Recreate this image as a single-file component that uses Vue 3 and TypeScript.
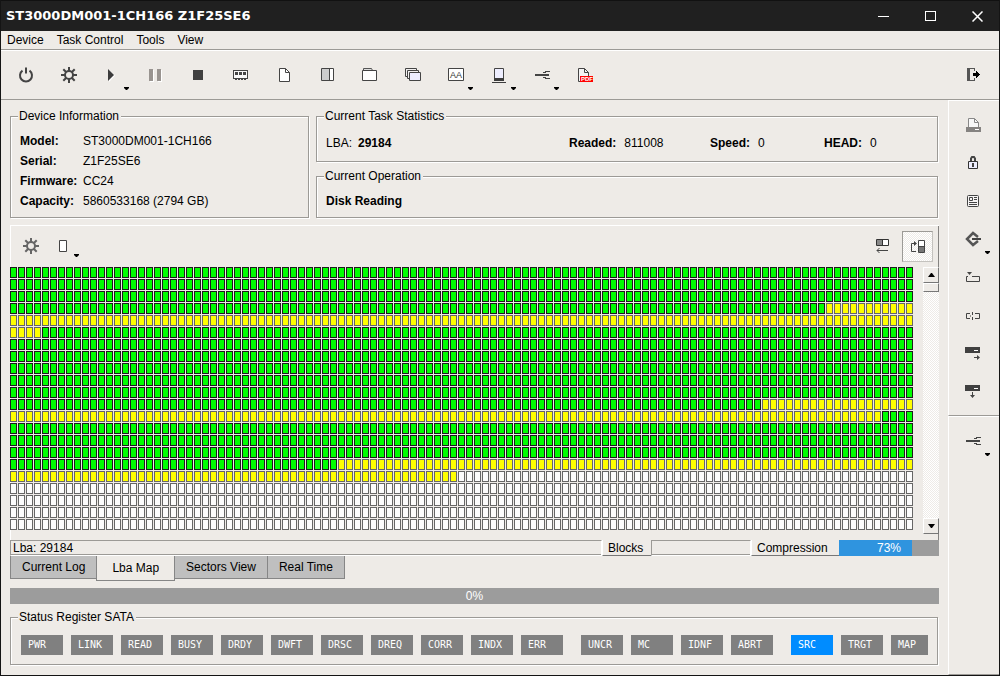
<script setup lang="ts">
import { ref } from 'vue'

type CellState = 'ok' | 'slow' | 'empty'

interface Run {
  state: CellState
  count: number
}

const deviceName = 'ST3000DM001-1CH166 Z1F25SE6'
const menus = ['Device', 'Task Control', 'Tools', 'View']

const deviceInfo = [
  { label: 'Model:', value: 'ST3000DM001-1CH166' },
  { label: 'Serial:', value: 'Z1F25SE6' },
  { label: 'Firmware:', value: 'CC24' },
  { label: 'Capacity:', value: '5860533168 (2794 GB)' },
]

const ROW = 113
const runs: Run[] = [
  { state: 'ok', count: 3 * ROW + 102 },
  { state: 'slow', count: 11 + ROW + 4 },
  { state: 'ok', count: 109 + 5 * ROW + 94 },
  { state: 'slow', count: 19 + 109 },
  { state: 'ok', count: 4 + 3 * ROW + 41 },
  { state: 'slow', count: 72 + 56 },
  { state: 'empty', count: 57 + 4 * ROW },
]
const cells: CellState[] = runs.flatMap((r) => Array<CellState>(r.count).fill(r.state))

const tabs = ['Current Log', 'Lba Map', 'Sectors View', 'Real Time']
const activeTab = ref('Lba Map')

const compression = ref(73)
const progress = ref(0)

const registers = [
  ['PWR', 'LINK', 'READ', 'BUSY', 'DRDY', 'DWFT', 'DRSC', 'DREQ', 'CORR', 'INDX', 'ERR'],
  ['UNCR', 'MC', 'IDNF', 'ABRT'],
  ['SRC', 'TRGT', 'MAP'],
]
const activeRegisters = new Set(['SRC'])

const tools = [
  { id: 'power', label: 'Power', drop: false },
  { id: 'gear', label: 'Settings', drop: false },
  { id: 'play', label: 'Start', drop: true },
  { id: 'pause', label: 'Pause', drop: false },
  { id: 'stop', label: 'Stop', drop: false },
  { id: 'memory', label: 'Memory', drop: false },
  { id: 'page', label: 'New', drop: false },
  { id: 'panels', label: 'Panels', drop: false },
  { id: 'folder', label: 'Open', drop: false },
  { id: 'windows', label: 'Windows', drop: false },
  { id: 'letters', label: 'Find', drop: true },
  { id: 'laptop', label: 'Host', drop: true },
  { id: 'connector', label: 'Connection', drop: true },
  { id: 'pdf', label: 'Export PDF', drop: false },
]

const sideTools = [
  { id: 'printer', label: 'Print', drop: false },
  { id: 'lock', label: 'Lock', drop: false },
  { id: 'news', label: 'Report', drop: false },
  { id: 'diamond', label: 'Jump', drop: true },
  { id: 'insert', label: 'Insert', drop: false },
  { id: 'split', label: 'Split', drop: false },
  { id: 'diskright', label: 'Disk copy', drop: false },
  { id: 'diskdown', label: 'Disk save', drop: false },
]
</script>

<template>
  <div class="window">
    <header class="titlebar">
      <h1>{{ deviceName }}</h1>
      <button type="button" aria-label="Minimize">
        <svg width="11" height="11" shape-rendering="crispEdges"><rect y="5" width="11" height="1" fill="#fff" /></svg>
      </button>
      <button type="button" aria-label="Maximize">
        <svg width="11" height="11" shape-rendering="crispEdges"><rect x=".5" y=".5" width="10" height="9" fill="none" stroke="#fff" /></svg>
      </button>
      <button type="button" aria-label="Close">
        <svg width="11" height="11"><path d="M.5 .5l10 10M10.500 .5l-10 10" stroke="#fff" stroke-width="1.500" /></svg>
      </button>
    </header>

    <nav class="menubar">
      <button v-for="m in menus" :key="m" type="button">{{ m }}</button>
    </nav>

    <svg class="defs" aria-hidden="true">
      <symbol id="i-power" viewBox="0 0 17 17">
        <path d="M4.500 3.600A6 6 0 1 0 11.500 3.600" fill="none" stroke="#444" stroke-width="2" />
        <path d="M8 .5v6" stroke="#444" stroke-width="2" />
      </symbol>
      <symbol id="i-gear" viewBox="0 0 17 17">
        <circle cx="8" cy="8" r="4" fill="none" stroke="currentColor" stroke-width="2" />
        <path d="M8 0v4M8 12v4M0 8h4M12 8h4M2.300 2.300l3 3M10.700 10.700l3 3M13.700 2.300l-3 3M5.300 10.700l-3 3" stroke="currentColor" stroke-width="2" />
      </symbol>
      <symbol id="i-play" viewBox="0 0 17 17">
        <path d="M5 3l6 5.500-6 6.500z" fill="#fff" />
        <path d="M4 2l6 6-6 6z" fill="#3c3c3c" />
      </symbol>
      <symbol id="i-pause" viewBox="0 0 17 17">
        <path d="M3 3h4v12h-4zM11 3h4v12h-4z" fill="#fff" />
        <path d="M2 2h4v12h-4zM10 2h4v12h-4z" fill="#999490" />
      </symbol>
      <symbol id="i-stop" viewBox="0 0 17 17"><path d="M3 3h10v10H3z" fill="#404040" /></symbol>
      <symbol id="i-memory" viewBox="0 0 17 17">
        <g shape-rendering="crispEdges">
          <path d="M.5 3.500h14v8H.5z" fill="#f8f8f8" stroke="#444" />
          <path d="M2 5h3v3H2zM6 5h3v3H6zM10 5h3v3h-3zM2 12h2v1H2zM5 12h2v1H5zM8 12h2v1H8zM11 12h2v1h-2z" fill="#444" />
        </g>
      </symbol>
      <symbol id="i-page" viewBox="0 0 17 17">
        <path d="M3.500 1.500h6l4 4v9h-10z" fill="#fff" stroke="#444" />
        <path d="M9.500 1.500v4h4" fill="none" stroke="#444" />
      </symbol>
      <symbol id="i-panels" viewBox="0 0 17 17">
        <path d="M2.500 1.500h12v12h-12z" fill="#fff" stroke="#444" />
        <path d="M3 2h7v11H3z" fill="#ccc" />
        <path d="M10.500 2v11" stroke="#444" />
      </symbol>
      <symbol id="i-folder" viewBox="0 0 17 17">
        <path d="M1.500 3V1.500h8l1 2" fill="#ddd" stroke="#555" />
        <path d="M.5 3.500h14v10H.5z" fill="#fff" stroke="#444" />
      </symbol>
      <symbol id="i-windows" viewBox="0 0 17 17">
        <path d="M.5 1.500h11v8H.5z" fill="#f2f0f0" stroke="#444" />
        <path d="M2.500 3.500h11v8h-11z" fill="#f2f0f0" stroke="#444" />
        <path d="M4.500 5.500h11v8h-11z" fill="#eef" stroke="#444" />
      </symbol>
      <symbol id="i-letters" viewBox="0 0 17 17">
        <path d="M.5 1.500h15v12H.5z" fill="#fff" stroke="#444" />
      </symbol>
      <symbol id="i-laptop" viewBox="0 0 17 17">
        <path d="M3.500 1.500h9v11h-9z" fill="#eef" stroke="#444" />
        <path d="M3 11h10v3H3zM1 15h14v1H1z" fill="#3c3c3c" />
      </symbol>
      <symbol id="i-connector" viewBox="0 0 17 17">
        <path d="M1 7h14v2H1zM11 4h5v1h-5zM9 5h3v1H9zM11 11h5v1h-5zM9 10h3v1H9z" fill="#444" />
      </symbol>
      <symbol id="i-pdf" viewBox="0 0 17 17">
        <path d="M1.500 1.500h6l4 4v9h-10z" fill="#f4f4f4" stroke="#444" />
        <path d="M7.500 1.500v4h4" fill="none" stroke="#444" />
        <path d="M3 9h13v6H3z" fill="#f00" />
      </symbol>
      <symbol id="i-exit" viewBox="0 0 17 17">
        <path d="M2 1h8v3H9V2H5v11h4v-2h1v3H2z" fill="#555" />
        <path d="M8 6h3V4h1v1h1v1h1v1h1v1h-1v1h-1v1h-1v1h-1V9H8z" fill="#000" />
      </symbol>
      <symbol id="i-printer" viewBox="0 0 17 17">
        <path d="M3.500 10V1.500h6l4 4V10" fill="#f8f8f8" stroke="#888" />
        <path d="M9.500 1.500v4h4" fill="none" stroke="#888" />
        <path d="M1 10h15v5H1z" fill="#858381" />
        <path d="M10 12h4v1h-4z" fill="#fff" />
      </symbol>
      <symbol id="i-lock" viewBox="0 0 17 17">
        <path d="M6 7V3.500L7 2h2l1 1.500V7" fill="none" stroke="#444" stroke-width="2" />
        <path d="M3.500 6.500h9v7h-9z" fill="#eef" stroke="#333" />
        <path d="M7 8h2v4H7z" fill="#444" />
      </symbol>
      <symbol id="i-news" viewBox="0 0 17 17">
        <rect x="2.500" y="2.500" width="11" height="11" rx="1" fill="#f6f4f4" stroke="#444" />
        <path d="M4.500 4.500h3v3h-3zM9 4.500h3M9 6.500h3M4 9.500h8M4 11.500h8" fill="none" stroke="#444" />
      </symbol>
      <symbol id="i-diamond" viewBox="0 0 17 17">
        <path d="M13 6L8 2 2 8l6 6 5-4" fill="none" stroke="#555" stroke-width="2.500" />
        <path d="M7 8h9" stroke="#444" stroke-width="2" />
      </symbol>
      <symbol id="i-insert" viewBox="0 0 17 17">
        <path d="M3 7.500H1.500v5h13v-5H7" fill="none" stroke="#444" />
        <path d="M2 3h5L4.500 6z" fill="#444" />
      </symbol>
      <symbol id="i-split" viewBox="0 0 17 17">
        <path d="M5 6.500H1.500v5H5M10 6.500h4.500v5H10M7.500 5v3M7.500 10v3M5 9h1" fill="none" stroke="#444" />
      </symbol>
      <symbol id="i-diskright" viewBox="0 0 17 17">
        <path d="M0 2h15v6H0z" fill="#404040" /><path d="M9 5h4v1H9z" fill="#fff" />
        <path d="M9 12h3v-2l3 2.500-3 2.500v-2H9z" fill="#444" />
      </symbol>
      <symbol id="i-diskdown" viewBox="0 0 17 17">
        <path d="M0 2h15v6H0z" fill="#404040" /><path d="M9 5h4v1H9z" fill="#fff" />
        <path d="M7 9h1v3h2l-2.500 3L5 12h2z" fill="#444" />
      </symbol>
      <symbol id="i-block" viewBox="0 0 17 17"><path d="M4.500 2.500h7v11h-7z" fill="#fff" stroke="#444" /></symbol>
      <symbol id="i-left" viewBox="0 0 17 17">
        <path d="M2.500 1.500h12v6h-12z" fill="#fff" stroke="#333" />
        <path d="M3 2h6v5H3z" fill="#888" /><path d="M8.500 2v5" stroke="#333" />
        <path d="M3 12.500h11M5.500 10L3 12.500 5.500 15" fill="none" stroke="#444" />
      </symbol>
      <symbol id="i-rotate" viewBox="0 0 17 17">
        <path d="M9.500 2.500h6v12h-6z" fill="#fff" stroke="#444" />
        <path d="M10 9h5v5h-5z" fill="#777" /><path d="M9 8.500h7" stroke="#444" />
        <path d="M7 13.500H2.500v-8H6" fill="none" stroke="#444" /><path d="M5 3l3 2.500L5 8z" fill="#444" />
      </symbol>
    </svg>

    <div class="toolbar">
      <button v-for="t in tools" :key="t.id" type="button" class="tool" :aria-label="t.label">
        <svg class="icon">
          <use :href="'#i-' + t.id" />
          <text v-if="t.id === 'letters'" x="2" y="11" class="icon-text" fill="#333" font-size="9">AA</text>
          <text v-if="t.id === 'pdf'" x="4" y="14" class="icon-text bold" fill="#fff" font-size="6">PDF</text>
        </svg>
        <svg v-if="t.drop" class="drop"><path d="M0 0h5v1L3 3H2L0 1z" /></svg>
      </button>
      <button type="button" class="tool exit" aria-label="Exit"><svg class="icon"><use href="#i-exit" /></svg></button>
    </div>

    <div class="body">
      <main class="main">
        <div class="info">
          <fieldset class="group device">
            <legend>Device Information</legend>
            <dl>
              <template v-for="d in deviceInfo" :key="d.label">
                <dt>{{ d.label }}</dt>
                <dd>{{ d.value }}</dd>
              </template>
            </dl>
          </fieldset>
          <div class="task">
            <fieldset class="group stats">
              <legend>Current Task Statistics</legend>
              <div class="stat-row">
                <div class="stat lba"><span>LBA:</span><b>29184</b></div>
                <div class="stat readed"><b>Readed:</b><span>811008</span></div>
                <div class="stat speed"><b>Speed:</b><span>0</span></div>
                <div class="stat head"><b>HEAD:</b><span>0</span></div>
              </div>
            </fieldset>
            <fieldset class="group operation">
              <legend>Current Operation</legend>
              <b>Disk Reading</b>
            </fieldset>
          </div>
        </div>

        <section class="panel">
          <div class="panel-tools">
            <button type="button" aria-label="Map settings" class="gray"><svg class="icon"><use href="#i-gear" /></svg></button>
            <button type="button" aria-label="Block size">
              <svg class="icon"><use href="#i-block" /></svg>
              <svg class="drop"><path d="M0 0h5v1L3 3H2L0 1z" /></svg>
            </button>
            <button type="button" aria-label="Horizontal" class="push"><svg class="icon"><use href="#i-left" /></svg></button>
            <button type="button" aria-label="Follow" aria-pressed="true" class="pressed"><svg class="icon"><use href="#i-rotate" /></svg></button>
          </div>
          <div class="map-row">
            <div class="map" role="img" aria-label="Lba map">
              <i v-for="(c, i) in cells" :key="i" :class="c"></i>
            </div>
            <div class="scroll">
              <button type="button" aria-label="Scroll up"><svg width="7" height="4"><path d="M3 0h1l3 4H0z" /></svg></button>
              <div class="thumb"></div>
              <button type="button" class="down" aria-label="Scroll down"><svg width="7" height="4"><path d="M0 0h7L4 4H3z" /></svg></button>
            </div>
          </div>
        </section>

        <div class="status">
          <span class="sunken grow">Lba: 29184</span>
          <span class="raised blocks">Blocks</span>
          <span class="sunken blank"></span>
          <span class="raised compression">Compression</span>
          <div class="meter" role="progressbar" aria-label="Compression" :aria-valuenow="compression">
            <div class="fill" :style="{ width: compression + '%' }"></div>
            <span>{{ compression }}%</span>
          </div>
        </div>

        <div class="tabs" role="tablist">
          <button
            v-for="t in tabs"
            :key="t"
            type="button"
            role="tab"
            :aria-selected="t === activeTab"
            :class="{ active: t === activeTab }"
            @click="activeTab = t"
          >
            {{ t }}
          </button>
        </div>

        <div class="meter total" role="progressbar" aria-label="Progress" :aria-valuenow="progress">
          <div class="fill" :style="{ width: progress + '%' }"></div>
          <span>{{ progress }}%</span>
        </div>

        <fieldset class="group registers">
          <legend>Status Register SATA</legend>
          <div class="leds">
            <ul v-for="(g, i) in registers" :key="i">
              <li v-for="r in g" :key="r" :class="{ on: activeRegisters.has(r) }">{{ r }}</li>
            </ul>
          </div>
        </fieldset>
      </main>

      <aside class="side">
        <div class="side-main">
          <button v-for="t in sideTools" :key="t.id" type="button" class="side-tool" :aria-label="t.label">
            <svg class="icon"><use :href="'#i-' + t.id" /></svg>
            <svg v-if="t.drop" class="drop"><path d="M0 0h5v1L3 3H2L0 1z" /></svg>
          </button>
        </div>
        <div class="side-rest">
          <button type="button" class="side-tool" aria-label="Connection">
            <svg class="icon"><use href="#i-connector" /></svg>
            <svg class="drop"><path d="M0 0h5v1L3 3H2L0 1z" /></svg>
          </button>
        </div>
      </aside>
    </div>
  </div>
</template>

<style>
body {
  margin: 0;
  background: #eeebe7;
}
</style>

<style scoped>
.window {
  box-sizing: border-box;
  min-height: 100vh;
  display: flex;
  flex-direction: column;
  border: 1px solid #141414;
  border-top: 0;
  background: #eeebe7;
  color: #000;
  font-family: 'Liberation Sans', Arial, sans-serif;
  font-size: 12px;
}
button {
  font: inherit;
  color: inherit;
  background: none;
  border: 0;
  padding: 0;
  margin: 0;
}
.defs {
  position: absolute;
  width: 0;
  height: 0;
}
.icon {
  display: block;
  width: 17px;
  height: 17px;
}
.icon-text {
  font-family: 'Liberation Sans', Arial, sans-serif;
}
.icon-text.bold {
  font-weight: bold;
}
.drop {
  position: absolute;
  width: 5px;
  height: 3px;
}

.titlebar {
  display: flex;
  align-items: center;
  gap: 4px;
  height: 30px;
  border-top: 1px solid #111;
  background: #202020;
}
.titlebar h1 {
  flex: 1;
  margin: 0;
  padding-left: 5px;
  color: #fff;
  font: bold 13px/30px 'DejaVu Sans', Verdana, sans-serif;
}
.titlebar button {
  display: flex;
  align-items: center;
  justify-content: center;
  width: 43px;
  height: 30px;
}

.menubar {
  display: flex;
  gap: 13px;
  padding: 0 6px;
  height: 18px;
  border-bottom: 1px solid #9c9a96;
}
.menubar button {
  line-height: 18px;
}
.toolbar {
  display: flex;
  padding-left: 4px;
  border-top: 1px solid #fff;
  border-bottom: 1px solid #9c9a96;
}
.tool {
  position: relative;
  padding: 16px 13px 15px;
  color: #444;
}
.tool .drop,
.side-tool .drop {
  left: 33px;
  top: 36px;
}
.drop {
  fill: #000;
}
.exit {
  margin-left: auto;
  padding-right: 17px;
}

.body {
  flex: 1;
  display: flex;
}
.main {
  flex: 1;
  min-width: 0;
  display: flex;
  flex-direction: column;
  padding: 9px 9px 10px;
}
.group {
  min-width: 0;
  margin: 0;
  border: 1px solid #9c9a96;
  box-shadow: 1px 1px 0 #fff, inset 1px 1px 0 #fff;
}
.group legend {
  margin-left: -2px;
  padding: 0 2px 0 1px;
  line-height: 14px;
  background: #eeebe7;
}
.info {
  display: flex;
  gap: 7px;
  margin-right: 1px;
}
.device {
  width: 299px;
  box-sizing: border-box;
  padding: 8px 9px 6px;
}
.device dl {
  display: grid;
  grid-template-columns: 63px 1fr;
  margin: 0;
  line-height: 20px;
}
dt,
b {
  font-weight: bold;
}
dd {
  margin: 0;
}
.task {
  flex: 1;
  display: flex;
  flex-direction: column;
  gap: 7px;
}
.stats {
  padding: 10px 9px 8px;
  line-height: 20px;
}
.operation {
  padding: 8px 9px 6px;
  line-height: 20px;
}
.stat-row {
  display: flex;
}
.stat {
  display: flex;
  gap: 8px;
}
.lba {
  flex: 1;
  gap: 6px;
}
.readed {
  width: 141px;
}
.speed {
  width: 114px;
}
.head {
  width: 104px;
}

.panel {
  flex: 1;
  display: flex;
  flex-direction: column;
  margin-top: 7px;
  padding: 1px 0 6px;
  box-shadow: inset 1px 1px 0 #fff, inset -1px 0 0 #858381;
}
.panel-tools {
  display: flex;
  align-items: center;
  gap: 1px;
  height: 41px;
  padding: 0 6px;
}
.panel-tools button {
  position: relative;
  padding: 6px 7px;
}
.panel-tools .drop {
  left: 26px;
  top: 22px;
}
.panel-tools .gray {
  color: #666;
}
.panel-tools .push {
  margin-left: auto;
}
.panel-tools .pressed {
  margin-left: 3px;
  padding: 6px;
  border: 1px solid #9c9a96;
  border-right-color: #c4c2be;
  border-bottom-color: #c4c2be;
  background: repeating-conic-gradient(#fff 0 25%, #eeebe7 0 50%) 0 0 / 2px 2px;
}
.map-row {
  flex: 1;
  display: flex;
}
.map {
  flex: 1;
  display: grid;
  grid-template-columns: repeat(auto-fill, 7px);
  grid-auto-rows: 11px;
  gap: 1px;
  align-content: start;
  padding: 0 10px 4px 0;
}
.map i {
  border: 1px solid #666;
  background: #fcfcfc;
}
.map .ok {
  border-color: #1c1c1c;
  background: #0f0;
}
.map .slow {
  background: #ff0;
}
.scroll {
  display: flex;
  flex-direction: column;
  width: 16px;
  background: repeating-conic-gradient(#fff 0 25%, #eeebe7 0 50%) 0 0 / 2px 2px;
}
.scroll button,
.thumb {
  box-sizing: border-box;
  border: 1px solid #fff;
  border-right-color: #777;
  border-bottom-color: #777;
  background: #eeebe7;
}
.scroll button {
  display: flex;
  align-items: center;
  justify-content: center;
  height: 16px;
}
.thumb {
  height: 9px;
}
.scroll .down {
  margin-top: auto;
}

.status {
  display: flex;
  height: 16px;
  line-height: 14px;
}
.status > span {
  box-sizing: border-box;
}
.sunken {
  border: 1px solid #9c9a96;
  border-right-color: #fff;
  border-bottom-color: #fff;
  box-shadow: inset 0 -1px 0 #9c9a96;
  padding-left: 2px;
}
.grow {
  flex: 1;
}
.raised {
  border-left: 1px solid #fff;
  border-bottom: 1px solid #777;
  padding-left: 5px;
  line-height: 16px;
}
.blocks {
  width: 49px;
}
.blank {
  width: 100px;
}
.compression {
  width: 88px;
}
.meter {
  position: relative;
  width: 100px;
  height: 16px;
  line-height: 16px;
  background: #9c9c9c;
  color: #fff;
  text-align: center;
}
.meter .fill {
  height: 100%;
  background: #2f94df;
}
.meter span {
  position: absolute;
  inset: 0;
}
.tabs {
  display: flex;
  align-items: flex-start;
  height: 25px;
}
.tabs button {
  box-sizing: border-box;
  height: 23px;
  padding: 0 11px;
  border: 1px solid #868686;
  border-top: 0;
  background: #bfbfbf;
}
.tabs button + button {
  margin-left: -1px;
}
.tabs .active {
  position: relative;
  height: 25px;
  padding: 0 15px;
  background: #eeebe7;
}
.total {
  width: auto;
  margin-top: 7px;
}
.registers {
  margin: 6px 1px 0 0;
  padding: 11px 9px 9px 10px;
}
.registers legend {
  margin-left: -3px;
}
.leds {
  display: flex;
  gap: 18px;
}
.leds ul {
  display: flex;
  gap: 8px;
  margin: 0;
  padding: 0;
  list-style: none;
}
.leds li {
  box-sizing: border-box;
  width: 42px;
  padding-left: 7px;
  background: #808080;
  color: #fff;
  font: 10px/20px 'DejaVu Sans Mono', monospace;
}
.leds ul:last-child li:last-child {
  width: 37px;
}
.leds .on {
  background: #008cff;
}

.side {
  display: flex;
  flex-direction: column;
  width: 51px;
}
.side-main,
.side-rest {
  border-left: 1px solid #fff;
  border-top: 1px solid #fff;
  border-bottom: 1px solid #9c9a96;
}
.side-main {
  padding-bottom: 10px;
}
.side-rest {
  flex: 1;
}
.side-tool {
  position: relative;
  display: block;
  width: 50px;
  padding: 16px 16px 5px;
}
.side-tool .drop {
  left: 36px;
}
</style>
